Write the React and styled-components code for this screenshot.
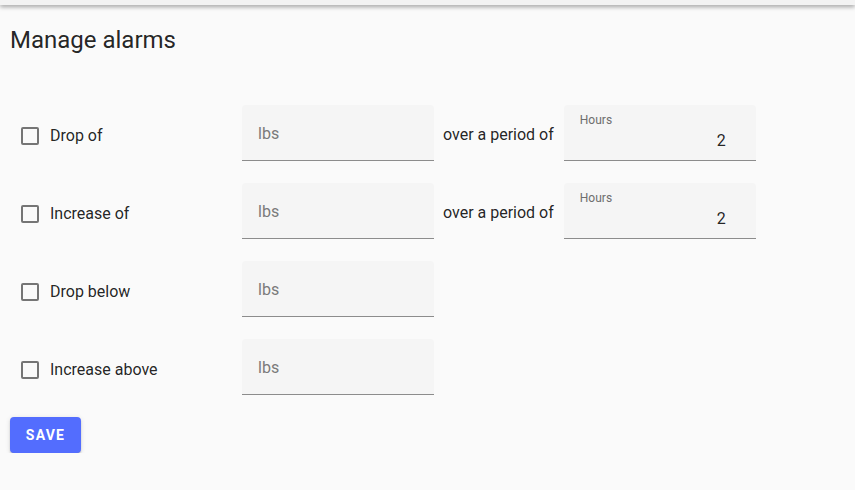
import React from "react";
import styled, { createGlobalStyle } from "styled-components";

const GlobalStyle = createGlobalStyle`
  html, body {
    margin: 0;
    padding: 0;
    background-color: #fafafa;
    font-family: Roboto, "Liberation Sans", sans-serif;
    color: rgba(0, 0, 0, 0.87);
  }
`;

const TopBar = styled.div`
  height: 5px;
  background-color: #f3f3f3;
  box-shadow: 0 2px 4px rgba(0, 0, 0, 0.35);
`;

const Page = styled.div`
  padding: 0 10px;
`;

const Title = styled.h1`
  margin: 21px 0 0;
  font-size: 24px;
  font-weight: 400;
  line-height: 28px;
`;

const Form = styled.div`
  display: flex;
  flex-direction: column;
  gap: 22px;
  margin-top: 51px;
`;

const Row = styled.div`
  display: flex;
  align-items: center;
  height: 56px;
`;

const Check = styled.label`
  width: 232px;
  display: flex;
  align-items: center;
  gap: 11px;
  padding-left: 11px;
  box-sizing: border-box;
  font-size: 16px;
  cursor: pointer;
  padding-top: 5px;
`;

const Box = styled.span`
  width: 18px;
  height: 18px;
  box-sizing: border-box;
  border: 2px solid #757575;
  border-radius: 2px;
`;

const Field = styled.div`
  width: 192px;
  height: 56px;
  box-sizing: border-box;
  background-color: #f5f5f5;
  border-radius: 4px 4px 0 0;
  border-bottom: 1px solid #8c8c8c;
  position: relative;
  padding: ${(p) => (p.labelled ? "22px 30px 0 16px" : "19px 16px 0")};
`;

const Placeholder = styled.span`
  font-size: 16px;
  color: #7a7a7a;
  line-height: 18px;
`;

const SmallLabel = styled.div`
  position: absolute;
  top: 8px;
  left: 16px;
  font-size: 12px;
  color: #6e6e6e;
`;

const Value = styled.div`
  text-align: right;
  font-size: 16px;
  line-height: 28px;
`;

const Between = styled.span`
  font-size: 16px;
  margin: 3px 10px 0 9px;
`;

const SaveButton = styled.button`
  margin-top: 22px;
  width: 71px;
  height: 36px;
  border: none;
  border-radius: 4px;
  background-color: #536dfe;
  color: #fff;
  font-family: Roboto, "Liberation Sans", sans-serif;
  font-size: 14px;
  font-weight: 700;
  letter-spacing: 1.2px;
  text-transform: uppercase;
  box-shadow: 0 3px 1px -2px rgba(0, 0, 0, 0.2), 0 2px 2px 0 rgba(0, 0, 0, 0.14),
    0 1px 5px 0 rgba(0, 0, 0, 0.12);
  cursor: pointer;
`;

const alarms = [
  { label: "Drop of", hours: true },
  { label: "Increase of", hours: true },
  { label: "Drop below", hours: false },
  { label: "Increase above", hours: false },
];

const App = () => {
  return (
    <>
      <GlobalStyle />
      <TopBar />
      <Page>
        <Title>Manage alarms</Title>
        <Form>
          {alarms.map((a) => (
            <Row key={a.label}>
              <Check>
                <Box />
                {a.label}
              </Check>
              <Field>
                <Placeholder>lbs</Placeholder>
              </Field>
              {a.hours && (
                <>
                  <Between>over a period of</Between>
                  <Field labelled>
                    <SmallLabel>Hours</SmallLabel>
                    <Value>2</Value>
                  </Field>
                </>
              )}
            </Row>
          ))}
        </Form>
        <SaveButton>Save</SaveButton>
      </Page>
    </>
  );
};

export default App;
